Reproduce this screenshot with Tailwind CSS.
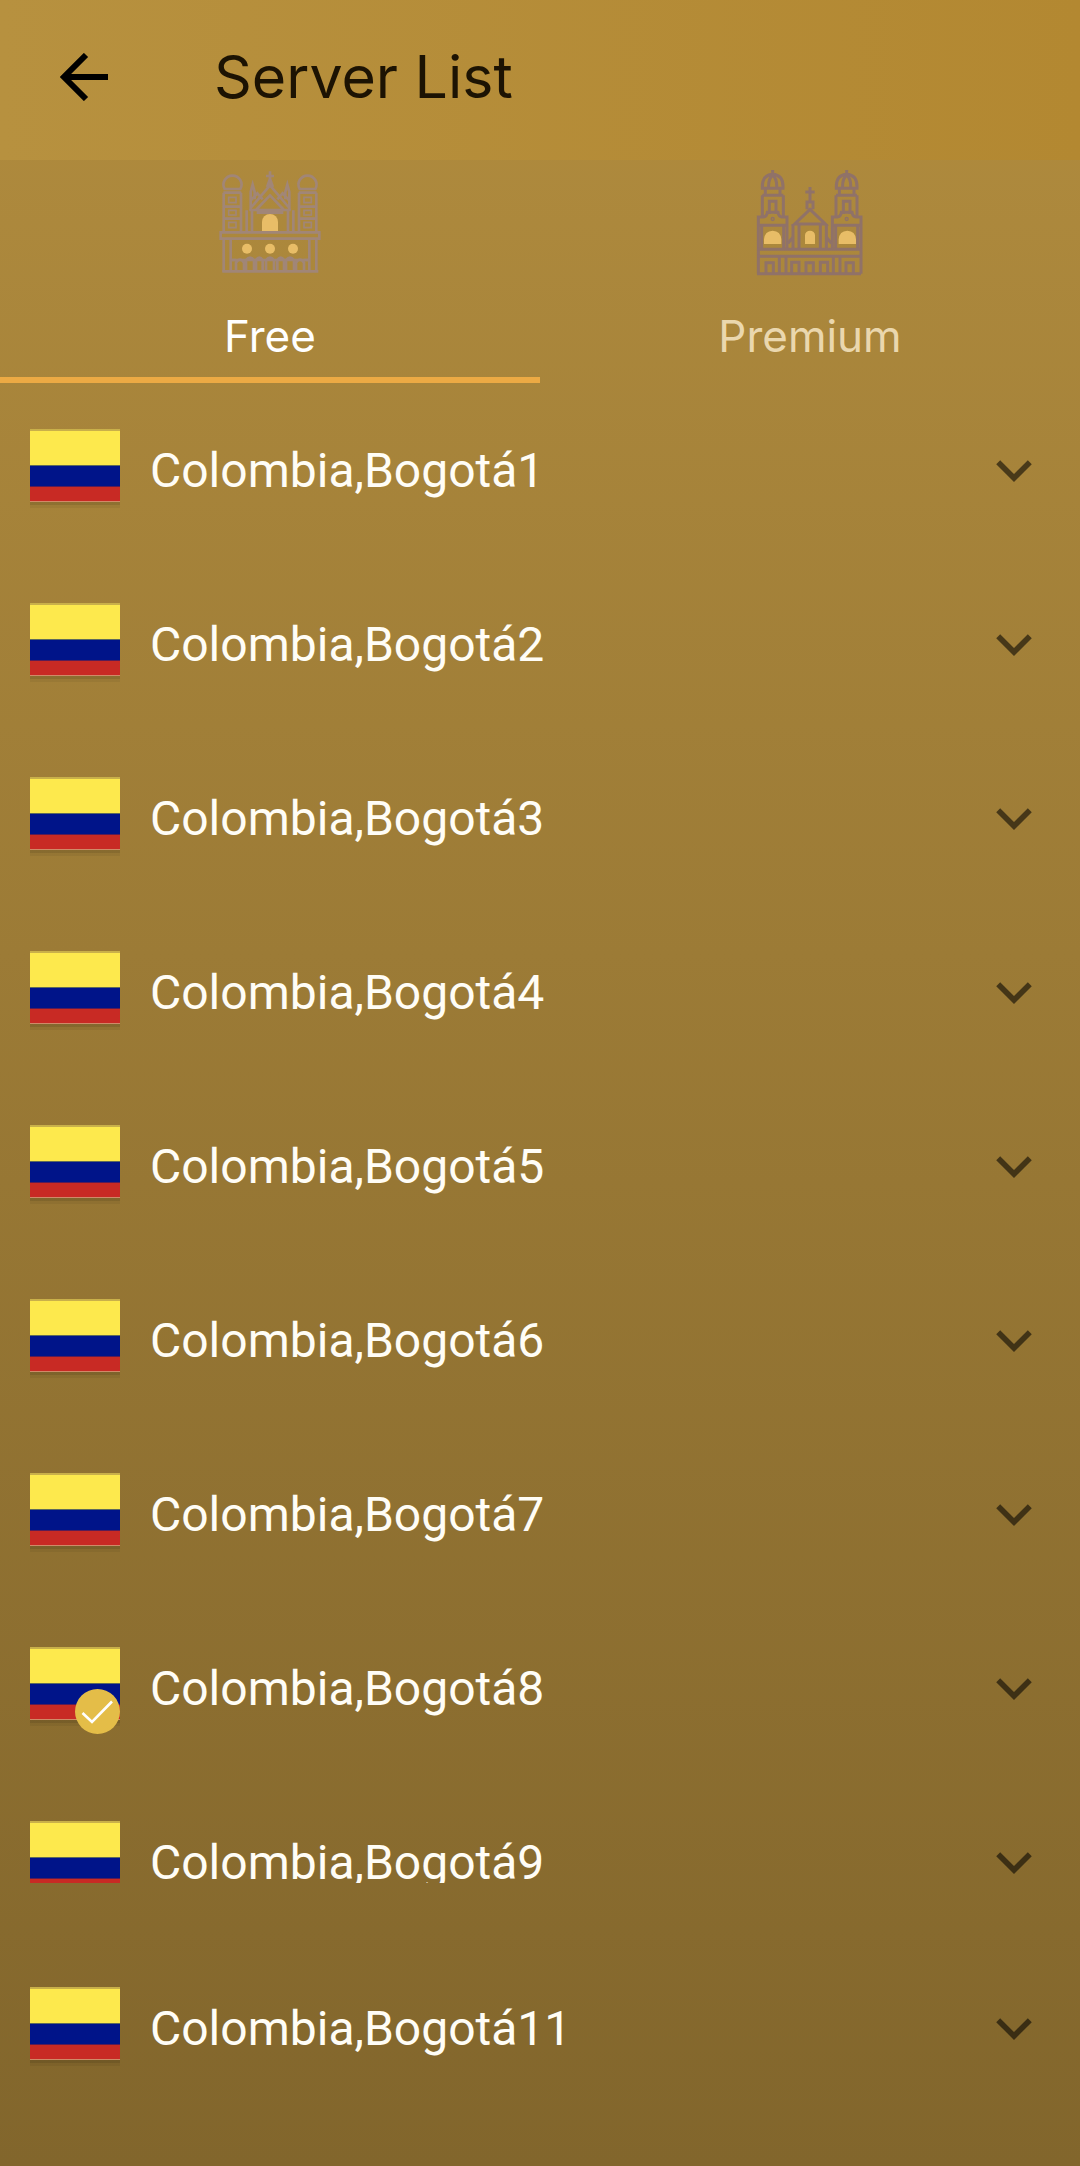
<!DOCTYPE html>
<html lang="en">
<head>
<meta charset="utf-8">
<meta name="viewport" content="width=device-width, initial-scale=1">
<title>Server List</title>
<script src="https://cdn.jsdelivr.net/npm/@tailwindcss/browser@4"></script>
</head>
<body class="flex min-h-screen flex-col bg-[#82662c] bg-linear-to-b from-[#b18c3e] to-[#82662c] font-['Roboto',sans-serif] text-white">

<!-- Shared shapes -->
<svg class="hidden" aria-hidden="true">
  <symbol id="flag" viewBox="0 0 90 90">
    <rect y="76" width="90" height="3" fill="#000" opacity=".14"/>
    <rect y="79" width="90" height="3" fill="#000" opacity=".05"/>
    <rect y="3" width="90" height="2" fill="#c9b04a"/>
    <rect y="5" width="90" height="34" fill="#fde94d"/>
    <rect y="39" width="90" height="21" fill="#001489"/>
    <rect y="39" width="90" height="1" fill="#5e6a5c"/>
    <rect y="60" width="90" height="15" fill="#c82a24"/>
    <rect y="60" width="90" height="1" fill="#5a1c55"/>
    <rect y="75" width="90" height="1" fill="#d08a68"/>
  </symbol>
  <symbol id="chevron" viewBox="0 0 36 22">
    <path d="M2.2 2.2 18 18 33.800 2.200" fill="none" stroke="#000" stroke-opacity=".56" stroke-width="5.600"/>
  </symbol>
  <symbol id="old-tower" viewBox="0 0 420 390">
    <path d="M74 87a27 27 0 1 1 47 0zM70 98h54M71 98v117M123 98v117M71 140h52M71 176h52M140 213v-62M156 213v-62M152 150v-54l6-22 6 22v22M152 122l20-22 16 18M152 144l58-68"/>
    <path d="M86 112h22v16H86zM86 151h22v14H86zM86 187h22v16H86z" stroke-width="5"/>
    <path d="M71 238v98M92 238v98M92 300h16M108 334v-26q12-18 24 0v26M138 334v-34q12-14 24 0v34M168 334v-34q10-14 20 0v34"/>
  </symbol>
  <symbol id="new-tower" viewBox="0 0 420 390">
    <path d="M98 30v16M67 85q-2-40 31-42 33 2 31 42zM86 85q-2-28 12-40 14 12 12 40M76 88v16M120 88v16M67 106h63M67 106v62M130 106v62M88 162v-38h20v38M55 341v-170h15q10 0 12-14h32q2 14 12 14h15v96M55 196h86M65 196v68M131 196v68M78 341v-33h22v33M118 291v50M138 291v50"/>
    <path d="M155 341v-34h22v34M144 250l14-18M159 192v75M177 192v75M198 341v-33h12"/>
    <circle cx="98" cy="177" r="2"/>
  </symbol>
</svg>

<header class="flex h-40 items-center bg-linear-to-r from-[#b7913f] to-[#b38831] px-[60px] pb-[6px]">
  <button type="button" aria-label="Back" class="size-12">
    <svg viewBox="0 0 48 48" class="size-12"><path d="M48 24H5M26 2 4 24l22 22" fill="none" stroke="#000" stroke-width="6"/></svg>
  </button>
  <h1 class="ml-[106px] font-['Inter',sans-serif] text-[59px] leading-[72px] text-[#1c1303]">Server List</h1>
</header>

<div role="tablist" class="grid grid-cols-2 font-['Inter',sans-serif] text-[44px] leading-[60px]">
  <button type="button" role="tab" aria-selected="true" class="flex flex-col items-center border-b-6 border-[#ecaa44] pb-[11px]">
    <svg viewBox="0 0 420 390" class="h-[130px] w-[140px]" fill="none" stroke="#a18677" stroke-width="8" aria-hidden="true">
      <use href="#old-tower"/>
      <use href="#old-tower" transform="translate(420 0) scale(-1 1)"/>
      <path d="M210 34v46M198 48h24M210 56l-7 20h14zM148 150h124M168 150l42-44 42 44M170 158h80M62 217h296v19H62zM67 334h288M198 334v-34q12-14 24 0v34M92 300h236"/>
      <path d="M186 213v-27a24 24 0 0 1 48 0v27z" fill="#e8bd67" stroke="none"/>
      <g fill="#e8bd67" stroke="none"><circle cx="141" cy="266" r="15"/><circle cx="210" cy="266" r="15"/><circle cx="279" cy="266" r="15"/></g>
    </svg>
    <span class="mt-4">Free</span>
  </button>
  <button type="button" role="tab" aria-selected="false" class="flex flex-col items-center border-b-6 border-transparent pb-[11px] text-[#ead7ae]">
    <svg viewBox="0 0 420 390" class="h-[130px] w-[140px]" fill="none" stroke="#907268" stroke-width="9" aria-hidden="true">
      <use href="#new-tower"/>
      <use href="#new-tower" transform="translate(418 0) scale(-1 1)"/>
      <path d="M210 81v44M196 96h28M201 148v-22h18v22M164 192l46-44 46 44zM51 268h312M51 289h312M51 341h312"/>
      <path d="M72 252v-14q2-25 26-26 24 1 26 26v14zM296 252v-14q2-25 26-26 24 1 26 26v14zM195 252v-26a15 14 0 0 1 30 0v26z" fill="#e8bd67" stroke="none"/>
    </svg>
    <span class="mt-4">Premium</span>
  </button>
</div>

<main class="pt-px">
  <ul id="servers" class="text-[48px] leading-[60px] text-[#fffdf6]"></ul>
</main>

<script>
  const servers = [1, 2, 3, 4, 5, 6, 7, 8, 9, 11];
  const selected = 8;
  const cropped = 9;
  const badge = `<svg viewBox="0 0 45 45" class="absolute right-0 bottom-0 size-[45px]"><circle cx="22.500" cy="22.500" r="22.500" fill="#e4bd48"/><path d="M7.500 24 17 33 37 12.500" fill="none" stroke="#fff" stroke-width="2.600"/></svg>`;
  document.getElementById('servers').innerHTML = servers.map(n => `
    <li class="${n === cropped ? 'h-[166px]' : 'h-[174px]'}">
      <button type="button" aria-expanded="false" class="flex w-full justify-between overflow-hidden pr-12 pl-[30px] text-left ${n === cropped ? 'h-[107px] items-start pt-[42px]' : 'h-full items-center'}">
        <span class="flex items-center gap-[30px]">
          <span class="relative block size-[90px]"><svg class="size-[90px]" aria-hidden="true"><use href="#flag"/></svg>${n === selected ? badge : ''}</span>
          <span>Colombia,Bogotá${n}</span>
        </span>
        <svg class="h-[22px] w-9 ${n === cropped ? 'mt-[34px]' : ''}" aria-hidden="true"><use href="#chevron"/></svg>
      </button>
    </li>`).join('');
</script>
</body>
</html>
